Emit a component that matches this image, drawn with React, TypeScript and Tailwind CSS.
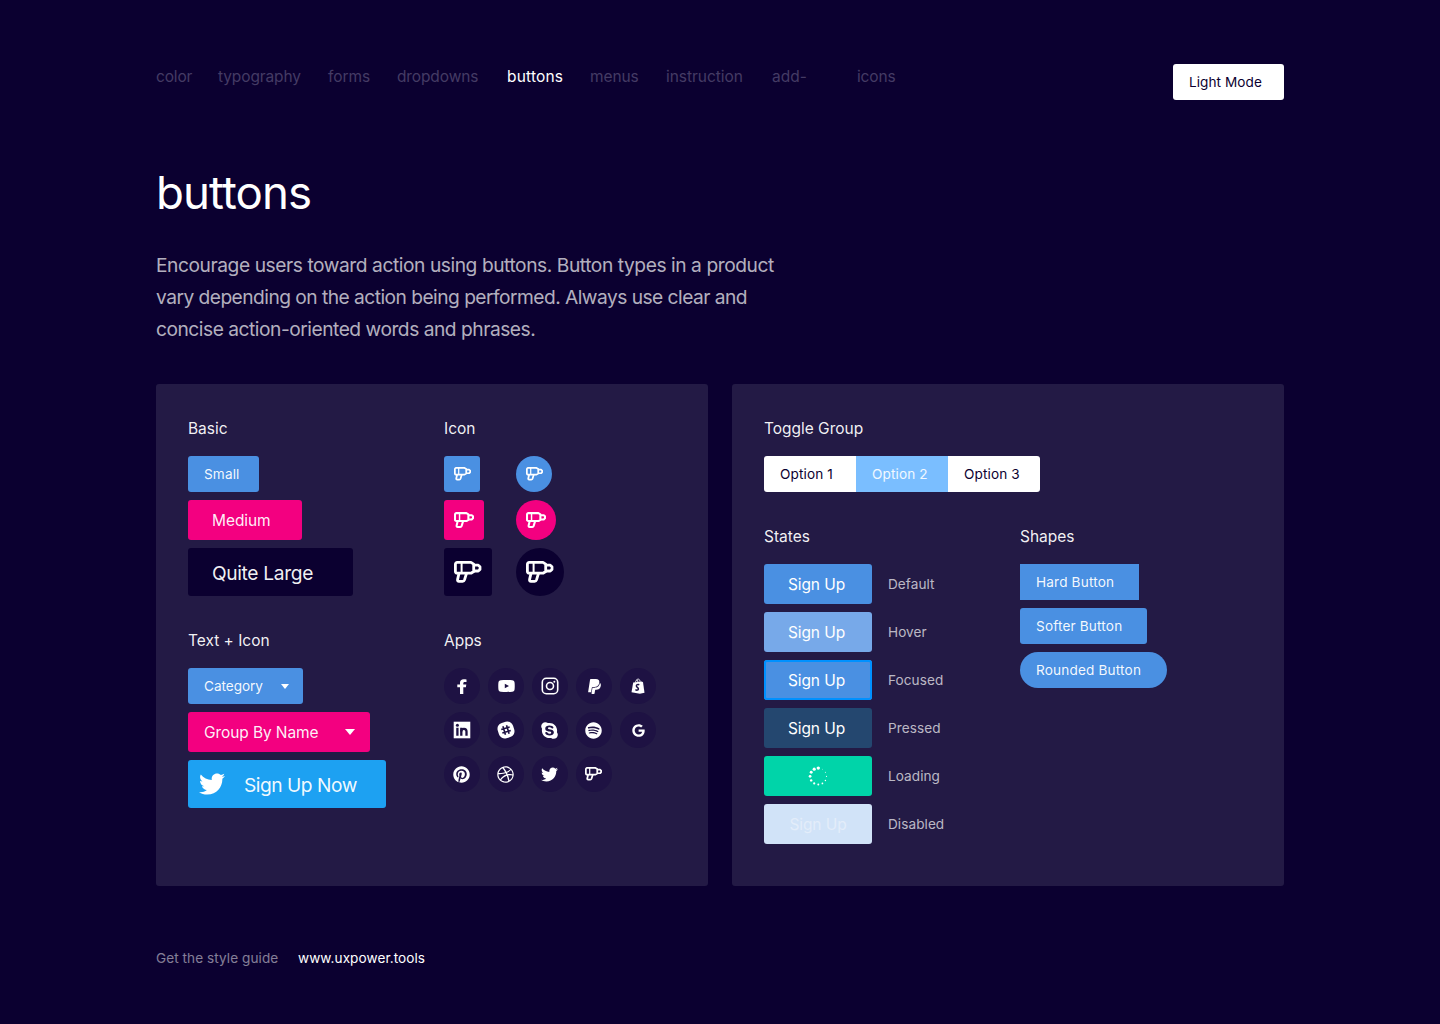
import type { ReactNode } from "react";
import { FaPaypal, FaSkype, FaSpotify, FaGoogle, FaPinterest, FaDribbble, FaTwitter } from "react-icons/fa";

const SM = "text-[13.6px] tracking-[0.13px]";
const MD = "text-[15.5px] tracking-[-0.08px] pt-0.5";

function Drill({ className }: { className: string }) {
  return (
    <svg viewBox="0 0 27.4 21.6" className={className} fill="none" stroke="currentColor" strokeWidth="2.8" strokeLinejoin="round">
      <path d="M3.2 1.4H17l2.7 1.7v7.4L17 12.2H3.2a1.8 1.8 0 0 1-1.8-1.8V3.2a1.8 1.8 0 0 1 1.8-1.8Z" />
      <path d="M7.6 1.4v10.8" strokeWidth="2" />
      <path d="M19.9 4.2h4.4l1.7 1.5v2.8L24.3 10h-4.4" />
      <path d="M5 12.4 3.6 18.4c-.3 1.2.3 1.9 1.4 1.9h3.6c1 0 1.6-.5 1.9-1.4l2-6.5" />
    </svg>
  );
}

function Facebook() {
  return (
    <svg viewBox="0 0 10 15" className="mr-px h-[15px] w-2.5" fill="currentColor">
      <path d="M3 15V8.3H.3V5.400H3V3.800C3 1.500 4.400.2 6.600.2c1 0 1.900.1 2.900.2V3H7.900C6.600 3 6.300 3.600 6.300 4.400v1h3L8.900 8.300H6.300V15Z" />
    </svg>
  );
}

function Youtube() {
  return (
    <svg viewBox="0 0 17 12" className="h-3 w-[17px]" fill="currentColor">
      <path
        fillRule="evenodd"
        d="M2.8.3C6 0 11 0 14.2.3 15.7.4 16.5 1.3 16.6 2.8c.2 2.2.2 4.2 0 6.4-.1 1.5-.9 2.4-2.4 2.5-3.2.3-8.2.3-11.4 0C1.3 11.6.5 10.7.4 9.2.2 7 .2 5 .4 2.8.5 1.3 1.3.4 2.8.3ZM6.800 3.800v4.400L11 6Z"
      />
    </svg>
  );
}

function Instagram() {
  return (
    <svg viewBox="0 0 18 18" className="size-[18px]" fill="none" stroke="currentColor" strokeWidth="1.600">
      <rect x="1.300" y="1.300" width="15.400" height="15.400" rx="4" />
      <circle cx="9" cy="9" r="3.500" />
      <circle cx="13.300" cy="4.700" r="1" fill="currentColor" stroke="none" />
    </svg>
  );
}

function Linkedin() {
  return (
    <svg viewBox="0 0 18 18" className="size-[18px]">
      <path d="M.7.7h16.600v16.600H.7Z" fill="currentColor" />
      <circle cx="4.400" cy="4.300" r="1.500" fill="#1e1243" />
      <path d="M4.400 6.800v8M8.300 6.800v8" stroke="#1e1243" strokeWidth="2.300" />
      <path d="M8.300 10.500c0-1.600 1-2.600 2.700-2.600s2.500 1 2.500 2.700v4.200" fill="none" stroke="#1e1243" strokeWidth="2.300" />
    </svg>
  );
}

function Shopify() {
  return (
    <svg viewBox="0 0 14 16" className="h-4 w-3.5">
      <path d="M2.200 4.600 10.800 3.400 12 4.300l1.500 10.400-4.600 1L.5 14.200Z" fill="currentColor" />
      <path d="M4.400 4.600C4.800 2.500 6 1.100 7.200 1.100S9 2.200 9.100 3.800M6.900 4C6.800 2.500 6.400 1.700 5.700 1.700" fill="none" stroke="currentColor" strokeWidth=".9" />
      <path d="M8.300 6.700C6.800 6.100 5.300 6.700 5.400 8c.1 1.300 2.100 1.400 2 2.900-.1 1.400-1.700 1.600-3 .8" fill="none" stroke="#1e1243" strokeWidth="1.500" />
    </svg>
  );
}

function Slack() {
  return (
    <svg viewBox="0 0 18 18" className="size-[18px]">
      <g transform="rotate(-17 9 9)">
        <rect x="1" y="1" width="16" height="16" rx="6" fill="currentColor" />
        <path d="M7.100 4.600v8.800M10.900 4.600v8.800M4.600 7.100h8.800M4.600 10.900h8.800" stroke="#1e1243" strokeWidth="1.600" fill="none" />
      </g>
    </svg>
  );
}

function Spinner() {
  return (
    <svg viewBox="-10 -10 20 20" className="size-5 text-white" fill="currentColor">
      {Array.from({ length: 12 }, (_, i) => {
        const a = -Math.PI / 2 - (i * Math.PI) / 6;
        return <circle key={i} cx={0.3 + 8.2 * Math.cos(a)} cy={0.3 + 8.2 * Math.sin(a)} r={1.7 - i * 0.12} />;
      })}
    </svg>
  );
}

function Title({ children }: { children: ReactNode }) {
  return <h2 className="mb-[15px] pt-px text-[15.5px] leading-6 tracking-[-0.02px] text-white/95">{children}</h2>;
}

function Caret({ className }: { className: string }) {
  return (
    <svg viewBox="0 0 10 6" className={className} preserveAspectRatio="none">
      <path d="M0 0h10L5 6Z" fill="#fff" />
    </svg>
  );
}

const nav: [string, string][] = [
  ["color", "w-[62px] tracking-[-0.15px]"],
  ["typography", "w-[110px] tracking-[-0.12px]"],
  ["forms", "w-[69px] tracking-[-0.05px]"],
  ["dropdowns", "w-[110px] tracking-[-0.12px]"],
  ["buttons", "w-[83px] tracking-[0.18px]"],
  ["menus", "w-[76px] tracking-[-0.1px]"],
  ["instruction", "w-[106px] tracking-[-0.03px]"],
  ["add-", "w-[85px]"],
  ["icons", "w-[60px] tracking-[-0.15px]"],
];

const apps: ReactNode[] = [
  <Facebook />,
  <Youtube />,
  <Instagram />,
  <FaPaypal className="size-[17px]" />,
  <Shopify />,
  <Linkedin />,
  <Slack />,
  <FaSkype className="mr-px size-[19px]" />,
  <FaSpotify className="mr-px size-[17px]" />,
  <FaGoogle className="size-[13px]" />,
  <FaPinterest className="mr-px size-[17px]" />,
  <FaDribbble className="mr-px size-[17px]" />,
  <FaTwitter className="mr-px size-[17px]" />,
  <Drill className="mr-px h-[13.5px] w-[17px]" />,
];

const states: [string, string, ReactNode][] = [
  ["Default", "bg-[#4a90e2]", "Sign Up"],
  ["Hover", "bg-[#77a9e9]", "Sign Up"],
  ["Focused", "ring-2 ring-inset ring-[#0091ff] bg-[#4a90e2]", "Sign Up"],
  ["Pressed", "bg-[#24476f]", "Sign Up"],
  ["Loading", "bg-[#00d4a9]", <Spinner />],
  ["Disabled", "bg-[#d1e3f8] pl-[3px] text-[#e3edfa]", "Sign Up"],
];

const iconSizes: [string, string][] = [
  ["size-9 bg-[#4a90e2]", "h-[13.5px] w-[17px]"],
  ["size-10 bg-[#f30080]", "h-4 w-5"],
  ["size-12 bg-[#0b0030]", "h-[21.6px] w-[27.4px]"],
];

export default function App() {
  return (
    <div className="h-[1024px] w-[1440px] overflow-hidden bg-[#0b0030] px-[156px] pt-16 font-['Inter',sans-serif] text-white">
      <header className="flex h-9 items-start justify-between">
        <nav className="flex pt-px text-[15.5px] leading-6">
          {nav.map(([label, cls]) => (
            <a key={label} className={`${cls} ${label === "buttons" ? "text-white" : "text-[#443b64]"}`}>
              {label}
            </a>
          ))}
        </nav>
        <button className="h-9 w-[111px] rounded-[3px] bg-white pl-4 text-left text-[13.6px] tracking-[0.06px] text-[#0b0030]">Light Mode</button>
      </header>

      <h1 className="mt-[65px] text-[45.6px] leading-[56px] tracking-[-0.9px]">buttons</h1>
      <p className="mt-7 text-[19.2px] leading-8 whitespace-nowrap text-white/70">
        <span className="block tracking-[-0.44px]">Encourage users toward action using buttons. Button types in a product</span>
        <span className="block tracking-[-0.53px]">vary depending on the action being performed. Always use clear and</span>
        <span className="block tracking-[-0.48px]">concise action-oriented words and phrases.</span>
      </p>

      <main className="mt-[39px] flex gap-6">
        <section className="grid h-[502px] w-[552px] grid-cols-[256px_1fr] content-start gap-y-8 rounded-[3px] bg-[#231a45] p-8">
          <div>
            <Title>Basic</Title>
            <div className="flex flex-col items-start gap-2 text-white/95">
              <button className={`${SM} h-9 w-[71px] rounded-[3px] bg-[#4a90e2] pl-4 text-left`}>Small</button>
              <button className={`${MD} h-10 w-[114px] rounded-[3px] bg-[#f30080] pl-6 text-left`}>Medium</button>
              <button className="h-12 w-[165px] rounded-[3px] bg-[#0b0030] pt-0.5 pl-6 text-left text-[19.2px] tracking-[-0.35px]">Quite Large</button>
            </div>
          </div>
          <div>
            <Title>Icon</Title>
            <div className="flex flex-col gap-2">
              {iconSizes.map(([box, icon]) => (
                <div key={box} className="grid grid-cols-[72px_1fr]">
                  <button className={`${box} flex items-center justify-center rounded-[3px]`}>
                    <Drill className={icon} />
                  </button>
                  <button className={`${box} flex items-center justify-center rounded-full`}>
                    <Drill className={icon} />
                  </button>
                </div>
              ))}
            </div>
          </div>
          <div>
            <Title>Text + Icon</Title>
            <div className="flex flex-col items-start gap-2 text-white/95">
              <button className="flex h-9 w-[115px] items-center justify-between rounded-[3px] bg-[#4a90e2] pr-3.5 pl-4 text-[13.6px]">
                <span className="tracking-[-0.04px]">Category</span>
                <Caret className="h-[5px] w-2" />
              </button>
              <button className="flex h-10 w-[182px] items-center justify-between rounded-[3px] bg-[#f30080] pr-[15px] pl-4 text-[15.5px] tracking-[-0.09px]">
                <span className="pt-0.5">Group By Name</span>
                <Caret className="h-1.5 w-2.5" />
              </button>
              <button className="flex h-12 w-[198px] items-center rounded-[3px] bg-[#1da1f2] pl-[11px]">
                <FaTwitter className="size-[26px] text-white" />
                <span className="mt-0.5 ml-[19px] text-[19.2px] tracking-[-0.48px]">Sign Up Now</span>
              </button>
            </div>
          </div>
          <div>
            <Title>Apps</Title>
            <div className="grid grid-cols-[repeat(5,36px)] gap-2">
              {apps.map((icon, i) => (
                <button key={i} className="flex size-9 items-center justify-center rounded-full bg-[#1e1243]">
                  {icon}
                </button>
              ))}
            </div>
          </div>
        </section>

        <section className="h-[502px] w-[552px] rounded-[3px] bg-[#231a45] p-8">
          <Title>Toggle Group</Title>
          <div className={`${SM} flex w-[276px] overflow-hidden rounded-[3px] bg-white text-[#0b0030]`}>
            <button className="h-9 w-[92px] pl-4 text-left">Option 1</button>
            <button className="h-9 w-[92px] bg-[#7abeff] pl-4 text-left text-white/90">Option 2</button>
            <button className="h-9 w-[92px] pl-4 text-left">Option 3</button>
          </div>
          <div className="mt-8 grid grid-cols-[256px_1fr]">
            <div>
              <Title>States</Title>
              <div className="flex flex-col gap-2">
                {states.map(([name, cls, content]) => (
                  <div key={name} className="flex items-center gap-4">
                    <button className={`flex h-10 w-[108px] items-center justify-center rounded-[3px] text-[15.5px] tracking-[-0.08px] ${cls}`}>
                      {typeof content === "string" ? <span className="pt-0.5 pr-[3px]">{content}</span> : content}
                    </button>
                    <span className="text-[13.6px] tracking-[0.06px] text-white/70">{name}</span>
                  </div>
                ))}
              </div>
            </div>
            <div>
              <Title>Shapes</Title>
              <div className="flex flex-col gap-2 text-[13.6px] tracking-[0.17px] text-white/95">
                <button className="h-9 w-[119px] bg-[#4a90e2] pl-4 text-left">Hard Button</button>
                <button className="h-9 w-[127px] rounded-[3px] bg-[#4a90e2] pl-4 text-left">Softer Button</button>
                <button className="h-9 w-[147px] rounded-full bg-[#4a90e2] pl-4 text-left">Rounded Button</button>
              </div>
            </div>
          </div>
        </section>
      </main>

      <footer className="mt-[60px] flex h-6 items-center text-[13.6px] tracking-[0.06px]">
        <span className="w-[142px] text-white/50">Get the style guide</span>
        <a>www.uxpower.tools</a>
      </footer>
    </div>
  );
}
